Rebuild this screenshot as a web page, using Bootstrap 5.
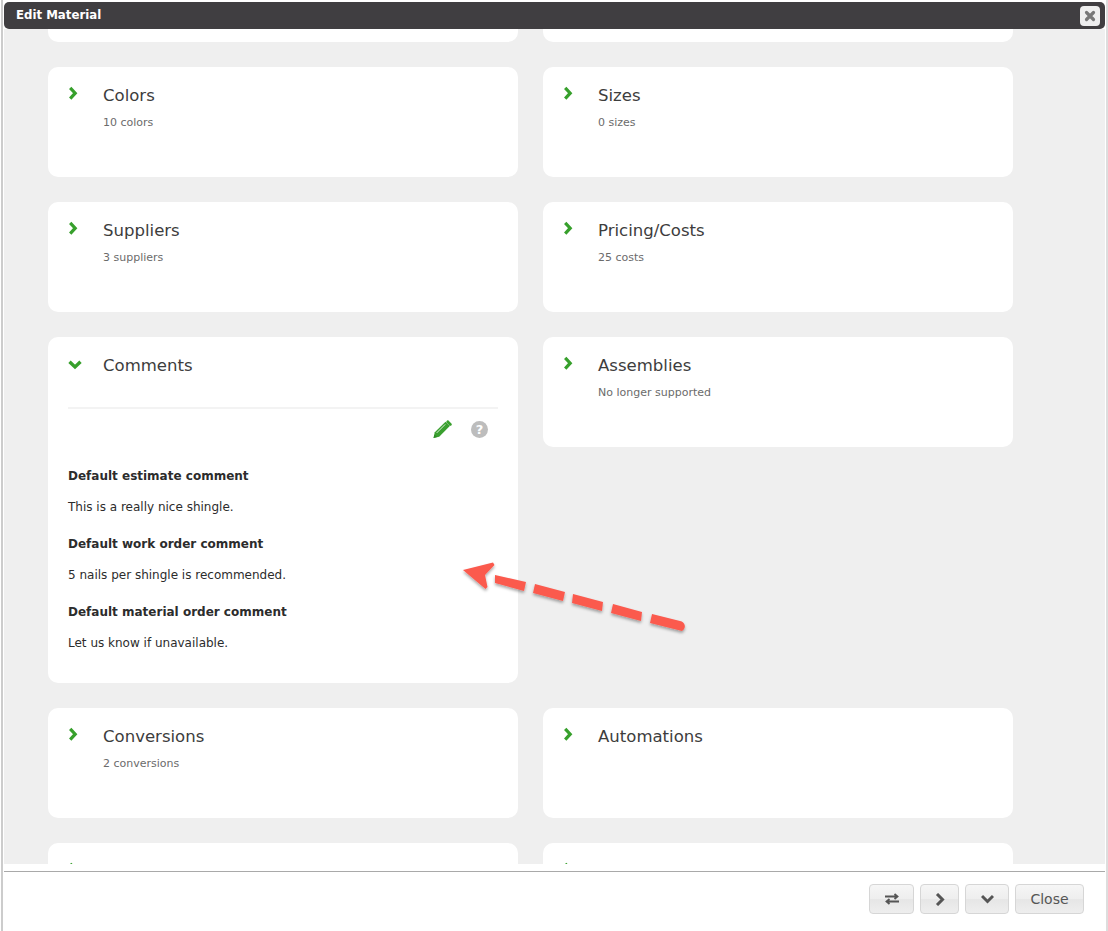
<!DOCTYPE html>
<html lang="en"><head><meta charset="utf-8"><title>Edit Material</title>
<link rel="stylesheet" href="https://cdn.jsdelivr.net/npm/bootstrap@5.3.0/dist/css/bootstrap.min.css">
<style>
html,body{height:100%;overflow:hidden;background:#fff}
body{font-family:"DejaVu Sans",Verdana,sans-serif;color:#333;font-size:12px}
.dlg{position:relative;height:931px;width:1107px;margin-left:1px;border-left:2px solid #ccc;border-right:2px solid #ddd;padding:2px 0 0 1px;display:flex;flex-direction:column;background:#fff}
.dlg-head{height:27px;background:#403e41;border-radius:5px;color:#fff;font-weight:700;font-size:11.75px;padding-left:12px;display:flex;align-items:center;justify-content:space-between;flex:none;margin-right:1px;padding-right:4px}
.head-txt{padding-top:1px}
.x-btn{width:20px;height:20px;border-radius:4px;background:#eee;display:flex;align-items:center;justify-content:center;border:0;padding:0;margin-right:1px}
.dlg-body{background:#efefef;height:835px;overflow:hidden;flex:none;padding:0 0 0 44px;margin-right:1px;display:flex;flex-direction:column;gap:25px}
.pair{display:flex;gap:25px;align-items:flex-start;flex:none}
.tile{width:470px;height:110px;background:#fff;border-radius:10px;padding:19px 20px 0;flex:none}
.tile-stub{height:13px;border-radius:0 0 10px 10px;padding:0}
.tile-open{height:346px}
.tile-hd{display:flex;align-items:flex-start}
.chev{width:35px;flex:none;height:20px;display:block}
.ttl{font-size:16.55px;line-height:20px;color:#3d3d3d}
.sub{font-size:11px;line-height:14px;color:#6b6b6b;margin:10px 0 0 35px}
.rule{border-top:2px solid #f3f3f3;margin:31px 0 0;height:0}
.tools{display:flex;justify-content:flex-end;gap:19px;height:24px;align-items:center;margin-top:8px;padding-right:10px}
.cmt-h{font-weight:700;font-size:12px;line-height:16px;margin:0;color:#2c2c2c}
.cmt-p{font-size:12px;line-height:16px;margin:15px 0 21px;color:#2c2c2c}
.cmt-first{margin-top:27px}
.dlg-foot{flex:1;background:#fff;padding-top:7px}
.foot-line{border-top:1px solid #a9a9a9;margin-right:1px}
.foot-btns{display:flex;justify-content:flex-end;gap:6px;padding:12px 22px 0 0}
.f-btn{height:30px;border:1px solid #d6d6d6;border-radius:4px;background:linear-gradient(#f6f6f6,#eeeeee 50%,#e6e6e6 52%,#eeeeee);color:#555;font-size:14px;padding:0;display:flex;align-items:center;justify-content:center}
.w44{width:45px}.w39{width:39px}.w44b{width:44px}.w69{width:69px}
.arrow{position:absolute;left:458px;top:558px;overflow:visible}
</style></head><body>
<div class="dlg">
 <div class="dlg-head"><span class="head-txt">Edit Material</span>
  <button class="x-btn" aria-label="Close"><svg width="12" height="12" viewBox="0 0 12 12"><path d="M2.5 2.5 9.5 9.5M9.5 2.5 2.5 9.5" stroke="#777" stroke-width="3.2" stroke-linecap="round"/></svg></button></div>
 <div class="dlg-body">
  <div class="pair"><div class="tile tile-stub"></div><div class="tile tile-stub"></div></div>
  <div class="pair">
   <div class="tile"><div class="tile-hd"><svg class="chev" viewBox="0 0 35 20"><path d="M2.200 1.800 7.200 7.200 2.200 12.600" fill="none" stroke="#37a02c" stroke-width="3.200"/></svg><div class="ttl">Colors</div></div><div class="sub">10 colors</div></div>
   <div class="tile"><div class="tile-hd"><svg class="chev" viewBox="0 0 35 20"><path d="M2.200 1.800 7.200 7.200 2.200 12.600" fill="none" stroke="#37a02c" stroke-width="3.200"/></svg><div class="ttl">Sizes</div></div><div class="sub">0 sizes</div></div>
  </div>
  <div class="pair">
   <div class="tile"><div class="tile-hd"><svg class="chev" viewBox="0 0 35 20"><path d="M2.200 1.800 7.200 7.200 2.200 12.600" fill="none" stroke="#37a02c" stroke-width="3.200"/></svg><div class="ttl">Suppliers</div></div><div class="sub">3 suppliers</div></div>
   <div class="tile"><div class="tile-hd"><svg class="chev" viewBox="0 0 35 20"><path d="M2.200 1.800 7.200 7.200 2.200 12.600" fill="none" stroke="#37a02c" stroke-width="3.200"/></svg><div class="ttl">Pricing/Costs</div></div><div class="sub">25 costs</div></div>
  </div>
  <div class="pair">
   <div class="tile tile-open"><div class="tile-hd"><svg class="chev" viewBox="0 0 35 20"><path d="M1.500 5.800 7 11 12.500 5.800" fill="none" stroke="#37a02c" stroke-width="3.400"/></svg><div class="ttl">Comments</div></div>
    <div class="rule"></div>
    <div class="tools">
     <svg width="19" height="18" viewBox="0 0 19 18"><path d="M.5 18 1.800 12.300 12.500 1.800 16.800 6.100 6.200 16.800Z" fill="#3aa02f"/><path d="M13.600.9c.7-.7 1.500-.7 2.100-.1l2.700 2.700c.6.600.6 1.400-.1 2.100L16.900 6 13.200 2.200Z" fill="#3aa02f"/><path d="M3.700 12.900 12.200 4.400" stroke="#fff" stroke-width=".8"/><path d="M.5 18l1-3.600 2.600 2.600Z" fill="#2f8a27"/></svg>
     <svg width="17" height="17" viewBox="0 0 17 17"><circle cx="8.500" cy="8.500" r="8.500" fill="#bdbdbd"/><text x="8.500" y="13" text-anchor="middle" font-family="DejaVu Sans" font-weight="700" font-size="13" fill="#fff">?</text></svg>
    </div>
    <p class="cmt-h cmt-first">Default estimate comment</p><p class="cmt-p">This is a really nice shingle.</p>
    <p class="cmt-h">Default work order comment</p><p class="cmt-p">5 nails per shingle is recommended.</p>
    <p class="cmt-h">Default material order comment</p><p class="cmt-p">Let us know if unavailable.</p>
   </div>
   <div class="tile"><div class="tile-hd"><svg class="chev" viewBox="0 0 35 20"><path d="M2.200 1.800 7.200 7.200 2.200 12.600" fill="none" stroke="#37a02c" stroke-width="3.200"/></svg><div class="ttl">Assemblies</div></div><div class="sub">No longer supported</div></div>
  </div>
  <div class="pair">
   <div class="tile"><div class="tile-hd"><svg class="chev" viewBox="0 0 35 20"><path d="M2.200 1.800 7.200 7.200 2.200 12.600" fill="none" stroke="#37a02c" stroke-width="3.200"/></svg><div class="ttl">Conversions</div></div><div class="sub">2 conversions</div></div>
   <div class="tile"><div class="tile-hd"><svg class="chev" viewBox="0 0 35 20"><path d="M2.200 1.800 7.200 7.200 2.200 12.600" fill="none" stroke="#37a02c" stroke-width="3.200"/></svg><div class="ttl">Automations</div></div></div>
  </div>
  <div class="pair">
   <div class="tile"><div class="tile-hd"><svg class="chev" viewBox="0 0 35 20"><path d="M2.200 1.800 7.200 7.200 2.200 12.600" fill="none" stroke="#37a02c" stroke-width="3.200"/></svg></div></div>
   <div class="tile"><div class="tile-hd"><svg class="chev" viewBox="0 0 35 20"><path d="M2.200 1.800 7.200 7.200 2.200 12.600" fill="none" stroke="#37a02c" stroke-width="3.200"/></svg></div></div>
  </div>
 </div>
 <div class="dlg-foot"><div class="foot-line"></div>
  <div class="foot-btns">
   <button class="f-btn w44" aria-label="Swap"><svg width="16" height="12" viewBox="0 0 16 12"><path d="M1 3.500H13M10.500 1 13.500 3.500 10.500 6M15 8.500H3M5.500 6 2.500 8.500 5.500 11" fill="none" stroke="#555" stroke-width="1.800"/></svg></button>
   <button class="f-btn w39" aria-label="Next"><svg width="10" height="13" viewBox="0 0 10 13"><path d="M2 1 7.500 6.500 2 12" fill="none" stroke="#555" stroke-width="3"/></svg></button>
   <button class="f-btn w44b" aria-label="Down"><svg width="13" height="10" viewBox="0 0 13 10"><path d="M1 2 6.500 7.500 12 2" fill="none" stroke="#555" stroke-width="3"/></svg></button>
   <button class="f-btn w69">Close</button>
  </div>
 </div>
 <svg class="arrow" width="232" height="80" viewBox="0 0 232 80">
  <defs><filter id="sh" x="-10%" y="-30%" width="120%" height="170%"><feDropShadow dx="0" dy="2" stdDeviation="1.500" flood-color="#000" flood-opacity=".35"/></filter></defs>
  <g filter="url(#sh)" fill="#fb5a4e">
   <path d="M2 12 32 4.500 33.500 7 24 17 26.500 29 24.500 31Z"/>
   <path d="M34 17 65 24 63 33 34 25Z"/>
   <path d="M74 26 104 34 102 43 72 35Z"/>
   <path d="M112 36 142 44 141 53 111 45Z"/>
   <path d="M152 46 181 54 180 63 150 55Z"/>
   <path d="M191 56 219 63C224 64 226 70 221 73L189 65Z"/>
  </g>
 </svg>
</div>
<script src="https://cdn.jsdelivr.net/npm/bootstrap@5.3.0/dist/js/bootstrap.bundle.min.js"></script>
</body></html>
